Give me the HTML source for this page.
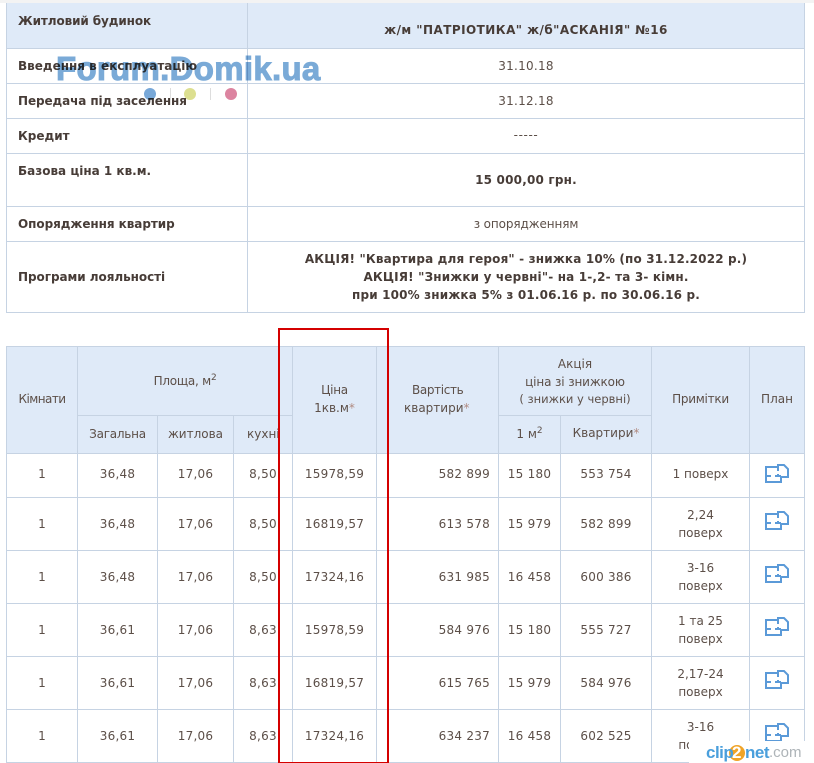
<!DOCTYPE html>
<html lang="uk"><head><meta charset="utf-8"><title>Житловий будинок</title>
<style>
html,body{margin:0;padding:0;background:#fff}
#p{position:relative;width:814px;height:763px;overflow:hidden;background:#fff;font-family:"DejaVu Sans","Liberation Sans",sans-serif;font-size:12px;color:#5c4f48}
#p div{position:absolute}
.h,.v{background:#c6d3e3}
.h{height:1px}.v{width:1px}
.t{white-space:nowrap;line-height:18px;height:18px;text-align:center}
.b{font-weight:bold;color:#473c37}
.l{text-align:left}
.r{text-align:right}
.n{letter-spacing:.25px}
.s{letter-spacing:-.25px}
sup{font-size:9px;line-height:0}
svg{position:absolute}
</style></head><body><div id="p">
<div style="left:0;top:0;width:814px;height:3px;background:#f3f3f3"></div>
<div style="left:6px;top:3px;width:798px;height:45px;background:#dfeaf8"></div>
<div style="left:6px;top:346px;width:798px;height:107px;background:#dfeaf8"></div>

<div class="h" style="left:6px;top:48px;width:798px"></div>
<div class="h" style="left:6px;top:83px;width:798px"></div>
<div class="h" style="left:6px;top:118px;width:798px"></div>
<div class="h" style="left:6px;top:153px;width:798px"></div>
<div class="h" style="left:6px;top:206px;width:798px"></div>
<div class="h" style="left:6px;top:241px;width:798px"></div>
<div class="h" style="left:6px;top:312px;width:798px"></div>
<div class="v" style="left:6px;top:3px;height:310px"></div>
<div class="v" style="left:247px;top:3px;height:310px"></div>
<div class="v" style="left:804px;top:3px;height:310px"></div>

<div class="t b l" style="left:18px;top:12px;letter-spacing:-.1px">Житловий будинок</div>
<div class="t b" style="left:248px;top:21px;width:556px;letter-spacing:.45px">ж/м "ПАТРІОТИКА" ж/б"АСКАНІЯ" №16</div>
<div class="t b l" style="left:18px;top:57px">Введення в експлуатацію</div>
<div class="t n" style="left:248px;top:57px;width:556px">31.10.18</div>
<div class="t b l" style="left:18px;top:92px;letter-spacing:-.1px">Передача під заселення</div>
<div class="t n" style="left:248px;top:92px;width:556px">31.12.18</div>
<div class="t b l" style="left:18px;top:127px">Кредит</div>
<div class="t" style="left:248px;top:126px;width:556px;letter-spacing:.6px">-----</div>
<div class="t b l" style="left:18px;top:162px">Базова ціна 1 кв.м.</div>
<div class="t b" style="left:248px;top:171px;width:556px;letter-spacing:.2px">15 000,00 грн.</div>
<div class="t b l" style="left:18px;top:215px;letter-spacing:-.05px">Опорядження квартир</div>
<div class="t" style="left:248px;top:215px;width:556px;letter-spacing:-.1px">з опорядженням</div>
<div class="t b l" style="left:18px;top:268px;letter-spacing:-.05px">Програми лояльності</div>
<div class="t b" style="left:248px;top:250px;width:556px;letter-spacing:.16px">АКЦІЯ! "Квартира для героя" - знижка 10% (по 31.12.2022 р.)</div>
<div class="t b" style="left:248px;top:268px;width:556px;letter-spacing:.16px">АКЦІЯ! "Знижки у червні"- на 1-,2- та 3- кімн.</div>
<div class="t b" style="left:248px;top:286px;width:556px;letter-spacing:.16px">при 100% знижка 5% з 01.06.16 р. по 30.06.16 р.</div>

<div style="left:56px;top:49px;font:bold 33px/40px 'Liberation Sans',sans-serif;color:#7aaad7;mix-blend-mode:multiply;-webkit-text-stroke:1px #7aaad7;letter-spacing:.3px;white-space:nowrap">Forum.Domik.ua</div>
<div style="left:144px;top:88px;width:12px;height:12px;border-radius:50%;background:#78a8d8;mix-blend-mode:multiply"></div>
<div style="left:184px;top:88px;width:12px;height:12px;border-radius:50%;background:#dcdf90;mix-blend-mode:multiply"></div>
<div style="left:225px;top:88px;width:12px;height:12px;border-radius:50%;background:#dc84a0;mix-blend-mode:multiply"></div>
<div style="left:170px;top:88px;width:1px;height:12px;background:#ddd"></div>
<div style="left:210px;top:88px;width:1px;height:12px;background:#ddd"></div>

<div class="h" style="left:6px;top:346px;width:798px"></div>
<div class="h" style="left:77px;top:415px;width:215px"></div>
<div class="h" style="left:498px;top:415px;width:153px"></div>
<div class="h" style="left:6px;top:453px;width:798px"></div>
<div class="h" style="left:6px;top:497px;width:798px"></div>
<div class="h" style="left:6px;top:550px;width:798px"></div>
<div class="h" style="left:6px;top:603px;width:798px"></div>
<div class="h" style="left:6px;top:656px;width:798px"></div>
<div class="h" style="left:6px;top:709px;width:798px"></div>
<div class="h" style="left:6px;top:762px;width:798px"></div>
<div class="v" style="left:6px;top:346px;height:417px"></div>
<div class="v" style="left:77px;top:346px;height:417px"></div>
<div class="v" style="left:157px;top:415px;height:348px"></div>
<div class="v" style="left:233px;top:415px;height:348px"></div>
<div class="v" style="left:292px;top:346px;height:417px"></div>
<div class="v" style="left:376px;top:346px;height:417px"></div>
<div class="v" style="left:498px;top:346px;height:417px"></div>
<div class="v" style="left:560px;top:415px;height:348px"></div>
<div class="v" style="left:651px;top:346px;height:417px"></div>
<div class="v" style="left:749px;top:346px;height:417px"></div>
<div class="v" style="left:804px;top:346px;height:417px"></div>

<div class="t" style="left:7px;top:390px;width:70px;letter-spacing:-.55px">Кімнати</div>
<div class="t s" style="left:78px;top:372px;width:214px">Площа, м<sup>2</sup></div>
<div class="t s" style="left:78px;top:425px;width:79px">Загальна</div>
<div class="t" style="left:158px;top:425px;width:75px">житлова</div>
<div class="t l" style="left:247px;top:425px;width:32px;overflow:hidden">кухні</div>
<div class="t s" style="left:293px;top:381px;width:83px">Ціна</div>
<div class="t" style="left:293px;top:399px;width:83px">1кв.м<span style="color:#b08a80">*</span></div>
<div class="t l" style="left:412px;top:381px;letter-spacing:-.35px">Вартість</div>
<div class="t l" style="left:404px;top:399px">квартири<span style="color:#b08a80">*</span></div>
<div class="t" style="left:499px;top:355px;width:152px">Акція</div>
<div class="t s" style="left:499px;top:373px;width:152px;letter-spacing:-.12px">ціна зі знижкою</div>
<div class="t" style="left:499px;top:390px;width:152px;font-size:11.5px">( знижки у червні)</div>
<div class="t" style="left:499px;top:425px;width:61px">1 м<sup>2</sup></div>
<div class="t" style="left:561px;top:424px;width:90px">Квартири<span style="color:#b08a80">*</span></div>
<div class="t s" style="left:652px;top:390px;width:97px">Примітки</div>
<div class="t" style="left:750px;top:390px;width:54px">План</div>

<div class="t" style="left:7px;top:465px;width:70px">1</div><div class="t n" style="left:78px;top:465px;width:79px">36,48</div><div class="t n" style="left:158px;top:465px;width:75px">17,06</div><div class="t n" style="left:234px;top:465px;width:58px">8,50</div><div class="t n" style="left:293px;top:465px;width:83px">15978,59</div><div class="t r n" style="left:377px;top:465px;width:113px">582 899</div><div class="t n" style="left:499px;top:465px;width:61px">15 180</div><div class="t n" style="left:561px;top:465px;width:90px">553 754</div><div class="t" style="left:652px;top:465px;width:97px">1 поверх</div>

<div class="t" style="left:7px;top:515px;width:70px">1</div><div class="t n" style="left:78px;top:515px;width:79px">36,48</div><div class="t n" style="left:158px;top:515px;width:75px">17,06</div><div class="t n" style="left:234px;top:515px;width:58px">8,50</div><div class="t n" style="left:293px;top:515px;width:83px">16819,57</div><div class="t r n" style="left:377px;top:515px;width:113px">613 578</div><div class="t n" style="left:499px;top:515px;width:61px">15 979</div><div class="t n" style="left:561px;top:515px;width:90px">582 899</div><div class="t" style="left:652px;top:506px;width:97px">2,24</div><div class="t" style="left:652px;top:524px;width:97px">поверх</div>

<div class="t" style="left:7px;top:568px;width:70px">1</div><div class="t n" style="left:78px;top:568px;width:79px">36,48</div><div class="t n" style="left:158px;top:568px;width:75px">17,06</div><div class="t n" style="left:234px;top:568px;width:58px">8,50</div><div class="t n" style="left:293px;top:568px;width:83px">17324,16</div><div class="t r n" style="left:377px;top:568px;width:113px">631 985</div><div class="t n" style="left:499px;top:568px;width:61px">16 458</div><div class="t n" style="left:561px;top:568px;width:90px">600 386</div><div class="t" style="left:652px;top:559px;width:97px">3-16</div><div class="t" style="left:652px;top:577px;width:97px">поверх</div>

<div class="t" style="left:7px;top:621px;width:70px">1</div><div class="t n" style="left:78px;top:621px;width:79px">36,61</div><div class="t n" style="left:158px;top:621px;width:75px">17,06</div><div class="t n" style="left:234px;top:621px;width:58px">8,63</div><div class="t n" style="left:293px;top:621px;width:83px">15978,59</div><div class="t r n" style="left:377px;top:621px;width:113px">584 976</div><div class="t n" style="left:499px;top:621px;width:61px">15 180</div><div class="t n" style="left:561px;top:621px;width:90px">555 727</div><div class="t" style="left:652px;top:612px;width:97px">1 та 25</div><div class="t" style="left:652px;top:630px;width:97px">поверх</div>

<div class="t" style="left:7px;top:674px;width:70px">1</div><div class="t n" style="left:78px;top:674px;width:79px">36,61</div><div class="t n" style="left:158px;top:674px;width:75px">17,06</div><div class="t n" style="left:234px;top:674px;width:58px">8,63</div><div class="t n" style="left:293px;top:674px;width:83px">16819,57</div><div class="t r n" style="left:377px;top:674px;width:113px">615 765</div><div class="t n" style="left:499px;top:674px;width:61px">15 979</div><div class="t n" style="left:561px;top:674px;width:90px">584 976</div><div class="t" style="left:652px;top:665px;width:97px">2,17-24</div><div class="t" style="left:652px;top:683px;width:97px">поверх</div>

<div class="t" style="left:7px;top:727px;width:70px">1</div><div class="t n" style="left:78px;top:727px;width:79px">36,61</div><div class="t n" style="left:158px;top:727px;width:75px">17,06</div><div class="t n" style="left:234px;top:727px;width:58px">8,63</div><div class="t n" style="left:293px;top:727px;width:83px">17324,16</div><div class="t r n" style="left:377px;top:727px;width:113px">634 237</div><div class="t n" style="left:499px;top:727px;width:61px">16 458</div><div class="t n" style="left:561px;top:727px;width:90px">602 525</div><div class="t" style="left:652px;top:718px;width:97px">3-16</div><div class="t" style="left:652px;top:736px;width:97px">поверх</div>

<svg style="left:765px;top:464px" width="24" height="20" viewBox="0 0 24 20" fill="none" stroke="#5b9ad8" stroke-width="2"><path d="M1 3H13V1H19L23 5V13H16V18H1ZM1 12H6M10 12H16M13 3V7M13 10V12"/></svg>
<svg style="left:765px;top:511px" width="24" height="20" viewBox="0 0 24 20" fill="none" stroke="#5b9ad8" stroke-width="2"><path d="M1 3H13V1H19L23 5V13H16V18H1ZM1 12H6M10 12H16M13 3V7M13 10V12"/></svg>
<svg style="left:765px;top:564px" width="24" height="20" viewBox="0 0 24 20" fill="none" stroke="#5b9ad8" stroke-width="2"><path d="M1 3H13V1H19L23 5V13H16V18H1ZM1 12H6M10 12H16M13 3V7M13 10V12"/></svg>
<svg style="left:765px;top:617px" width="24" height="20" viewBox="0 0 24 20" fill="none" stroke="#5b9ad8" stroke-width="2"><path d="M1 3H13V1H19L23 5V13H16V18H1ZM1 12H6M10 12H16M13 3V7M13 10V12"/></svg>
<svg style="left:765px;top:670px" width="24" height="20" viewBox="0 0 24 20" fill="none" stroke="#5b9ad8" stroke-width="2"><path d="M1 3H13V1H19L23 5V13H16V18H1ZM1 12H6M10 12H16M13 3V7M13 10V12"/></svg>
<svg style="left:765px;top:723px" width="24" height="20" viewBox="0 0 24 20" fill="none" stroke="#5b9ad8" stroke-width="2"><path d="M1 3H13V1H19L23 5V13H16V18H1ZM1 12H6M10 12H16M13 3V7M13 10V12"/></svg>

<div style="left:278px;top:328px;width:107px;height:432px;border:2px solid #d40000"></div>

<div style="left:689px;top:741px;width:125px;height:22px;background:#fff"></div>
<div style="left:729px;top:745px;width:16px;height:16px;border-radius:50%;background:#f0a428"></div>
<div style="left:706px;top:743px;font:bold 17px/20px 'Liberation Sans',sans-serif;color:#4a9fdc;white-space:nowrap;letter-spacing:-.5px">clip</div>
<div style="left:732px;top:743px;font:bold 17px/20px 'Liberation Sans',sans-serif;color:#fff;white-space:nowrap">2</div>
<div style="left:745px;top:743px;font:bold 17px/20px 'Liberation Sans',sans-serif;color:#4a9fdc;white-space:nowrap;letter-spacing:-.5px">net</div>
<div style="left:769px;top:743px;font:15px/20px 'Liberation Sans',sans-serif;color:#aeb4b8;white-space:nowrap">.com</div>
</div></body></html>
